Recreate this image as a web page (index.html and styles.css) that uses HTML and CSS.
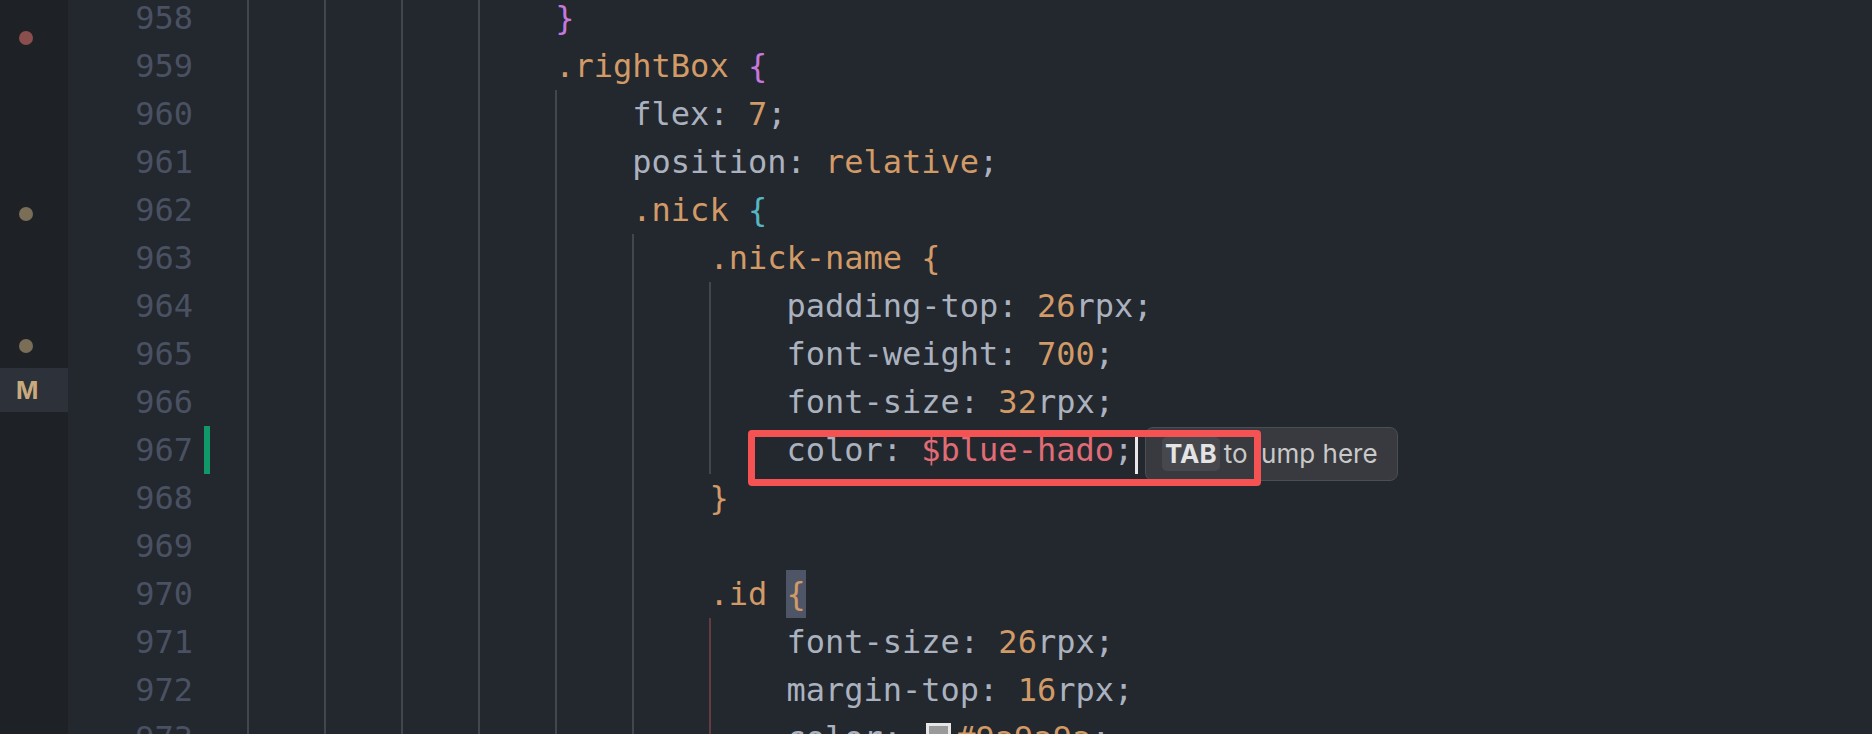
FILE: index.html
```html
<!DOCTYPE html>
<html lang="en">
<head>
    <meta charset="UTF-8">
    <meta name="viewport" content="width=device-width, initial-scale=1.0">
    <title>index.scss</title>
    <link rel="stylesheet" href="styles.css">
</head>
<body>
    <div class="editor">
        <div class="strip">
            <div class="strip-row"><span class="dot dot-red"></span></div>
            <div class="strip-row"></div>
            <div class="strip-row"></div>
            <div class="strip-row"></div>
            <div class="strip-row"><span class="dot dot-olive"></span></div>
            <div class="strip-row"></div>
            <div class="strip-row"></div>
            <div class="strip-row"><span class="dot dot-olive"></span></div>
            <div class="strip-row active"><span class="badge">M</span></div>
        </div>

        <div class="lines">
            <div class="line">
                <span class="ln">958</span><span class="deco"></span>
                <span class="text"><span class="ind"></span><span class="ind"></span><span class="ind"></span><span class="ind"></span><span class="b1">}</span></span>
            </div>
            <div class="line">
                <span class="ln">959</span><span class="deco"></span>
                <span class="text"><span class="ind"></span><span class="ind"></span><span class="ind"></span><span class="ind"></span><span class="sel">.rightBox</span> <span class="b1">{</span></span>
            </div>
            <div class="line">
                <span class="ln">960</span><span class="deco"></span>
                <span class="text"><span class="ind"></span><span class="ind"></span><span class="ind"></span><span class="ind"></span><span class="ind"></span>flex: <span class="num">7</span>;</span>
            </div>
            <div class="line">
                <span class="ln">961</span><span class="deco"></span>
                <span class="text"><span class="ind"></span><span class="ind"></span><span class="ind"></span><span class="ind"></span><span class="ind"></span>position: <span class="num">relative</span>;</span>
            </div>
            <div class="line">
                <span class="ln">962</span><span class="deco"></span>
                <span class="text"><span class="ind"></span><span class="ind"></span><span class="ind"></span><span class="ind"></span><span class="ind"></span><span class="sel">.nick</span> <span class="b2">{</span></span>
            </div>
            <div class="line">
                <span class="ln">963</span><span class="deco"></span>
                <span class="text"><span class="ind"></span><span class="ind"></span><span class="ind"></span><span class="ind"></span><span class="ind"></span><span class="ind"></span><span class="sel">.nick-name</span> <span class="b3">{</span></span>
            </div>
            <div class="line">
                <span class="ln">964</span><span class="deco"></span>
                <span class="text"><span class="ind"></span><span class="ind"></span><span class="ind"></span><span class="ind"></span><span class="ind"></span><span class="ind"></span><span class="ind"></span>padding-top: <span class="num">26</span>rpx;</span>
            </div>
            <div class="line">
                <span class="ln">965</span><span class="deco"></span>
                <span class="text"><span class="ind"></span><span class="ind"></span><span class="ind"></span><span class="ind"></span><span class="ind"></span><span class="ind"></span><span class="ind"></span>font-weight: <span class="num">700</span>;</span>
            </div>
            <div class="line">
                <span class="ln">966</span><span class="deco"></span>
                <span class="text"><span class="ind"></span><span class="ind"></span><span class="ind"></span><span class="ind"></span><span class="ind"></span><span class="ind"></span><span class="ind"></span>font-size: <span class="num">32</span>rpx;</span>
            </div>
            <div class="line current">
                <span class="ln">967</span><span class="deco added"></span>
                <span class="text"><span class="ind"></span><span class="ind"></span><span class="ind"></span><span class="ind"></span><span class="ind"></span><span class="ind"></span><span class="ind"></span>color: <span class="var">$blue-hado</span>;<span class="cursor"></span></span>
                <div class="hint"><span class="key">TAB</span><span class="hint-text">to jump here</span></div>
                <div class="mark"></div>
            </div>
            <div class="line">
                <span class="ln">968</span><span class="deco"></span>
                <span class="text"><span class="ind"></span><span class="ind"></span><span class="ind"></span><span class="ind"></span><span class="ind"></span><span class="ind"></span><span class="b3">}</span></span>
            </div>
            <div class="line">
                <span class="ln">969</span><span class="deco"></span>
                <span class="text"><span class="ind"></span><span class="ind"></span><span class="ind"></span><span class="ind"></span><span class="ind"></span><span class="ind"></span></span>
            </div>
            <div class="line">
                <span class="ln">970</span><span class="deco"></span>
                <span class="text"><span class="ind"></span><span class="ind"></span><span class="ind"></span><span class="ind"></span><span class="ind"></span><span class="ind"></span><span class="sel">.id</span> <span class="b3 match">{</span></span>
            </div>
            <div class="line">
                <span class="ln">971</span><span class="deco"></span>
                <span class="text"><span class="ind"></span><span class="ind"></span><span class="ind"></span><span class="ind"></span><span class="ind"></span><span class="ind"></span><span class="ind ind-active"></span>font-size: <span class="num">26</span>rpx;</span>
            </div>
            <div class="line">
                <span class="ln">972</span><span class="deco"></span>
                <span class="text"><span class="ind"></span><span class="ind"></span><span class="ind"></span><span class="ind"></span><span class="ind"></span><span class="ind"></span><span class="ind ind-active"></span>margin-top: <span class="num">16</span>rpx;</span>
            </div>
            <div class="line">
                <span class="ln">973</span><span class="deco"></span>
                <span class="text"><span class="ind"></span><span class="ind"></span><span class="ind"></span><span class="ind"></span><span class="ind"></span><span class="ind"></span><span class="ind ind-active"></span>color: <span class="swatch"></span><span class="num">#9a9a9a</span>;</span>
            </div>
        </div>
    </div>
</body>
</html>
```

FILE: styles.css
```css
body {
    margin: 0;
    background: #23272e;
    overflow: hidden;
}
.editor {
    display: flex;
    height: 734px;
    overflow: hidden;
}

/* left strip */
.strip {
    width: 68px;
    flex-shrink: 0;
    background: #1e2126;
    padding-top: 16px;
}
.strip-row {
    height: 44px;
    display: flex;
    align-items: center;
}
.strip-row.active {
    background: #2c313a;
}
.dot {
    width: 14px;
    height: 14px;
    border-radius: 50%;
    margin-left: 19px;
}
.dot-red {
    background: #8a4f4c;
}
.dot-olive {
    background: #7b6e57;
}
.badge {
    margin-left: 16px;
    font-family: Inter, "Liberation Sans", sans-serif;
    font-weight: 700;
    font-size: 24px;
    color: #c8aa7d;
}

/* code lines */
.lines {
    flex: 1;
    margin-top: -6px;
    font-family: "DejaVu Sans Mono", "Liberation Mono", monospace;
    font-size: 32px;
    line-height: 48px;
    color: #abb2bf;
}
.line {
    display: flex;
    height: 48px;
    white-space: pre;
}
.line.current {
    position: relative;
}
.ln {
    width: 125px;
    text-align: right;
    color: #495162;
}
.deco {
    width: 6px;
    margin: 0 37px 0 11px;
}
.deco.added {
    background: #109868;
}
.text {
    display: block;
}
.ind {
    display: inline-block;
    width: 4ch;
    height: 48px;
    vertical-align: top;
    box-shadow: inset 2px 0 0 #43464d;
}
.ind-active {
    box-shadow: inset 2px 0 0 #633c41;
}
.sel, .num {
    color: #d19a66;
}
.var {
    color: #e06c75;
}
.b1 {
    color: #c678dd;
}
.b2 {
    color: #56b6c2;
}
.b3 {
    color: #d19a66;
}
.match {
    display: inline-block;
    background: #4d5566;
}
.cursor {
    display: inline-block;
    width: 3px;
    height: 37px;
    margin: 11px 0 0 2px;
    vertical-align: top;
    background: #e8e8e8;
}
.swatch {
    display: inline-block;
    width: 25px;
    height: 25px;
    box-sizing: border-box;
    margin: 0 5px;
    vertical-align: 1px;
    border: 3px solid #e6e6e6;
    background: #9a9a9a;
}

/* inline hint widget */
.hint {
    position: absolute;
    left: 1077px;
    top: 1px;
    width: 253px;
    height: 54px;
    box-sizing: border-box;
    display: flex;
    align-items: center;
    padding-left: 16px;
    background: #383a3f;
    border: 1px solid #4b4e54;
    border-radius: 8px;
    font-family: Inter, "Liberation Sans", sans-serif;
    font-size: 26px;
    line-height: 34px;
    color: #c9c9c9;
}
.key {
    padding: 0 3px;
    background: #46484d;
    border-radius: 5px;
    font-weight: 700;
    color: #e4e4e4;
}
.hint-text {
    margin-left: 4px;
}

/* annotation frame */
.mark {
    position: absolute;
    left: 680px;
    top: 4px;
    width: 513px;
    height: 56px;
    box-sizing: border-box;
    border: 7px solid #f55353;
    border-radius: 4px;
}
```
